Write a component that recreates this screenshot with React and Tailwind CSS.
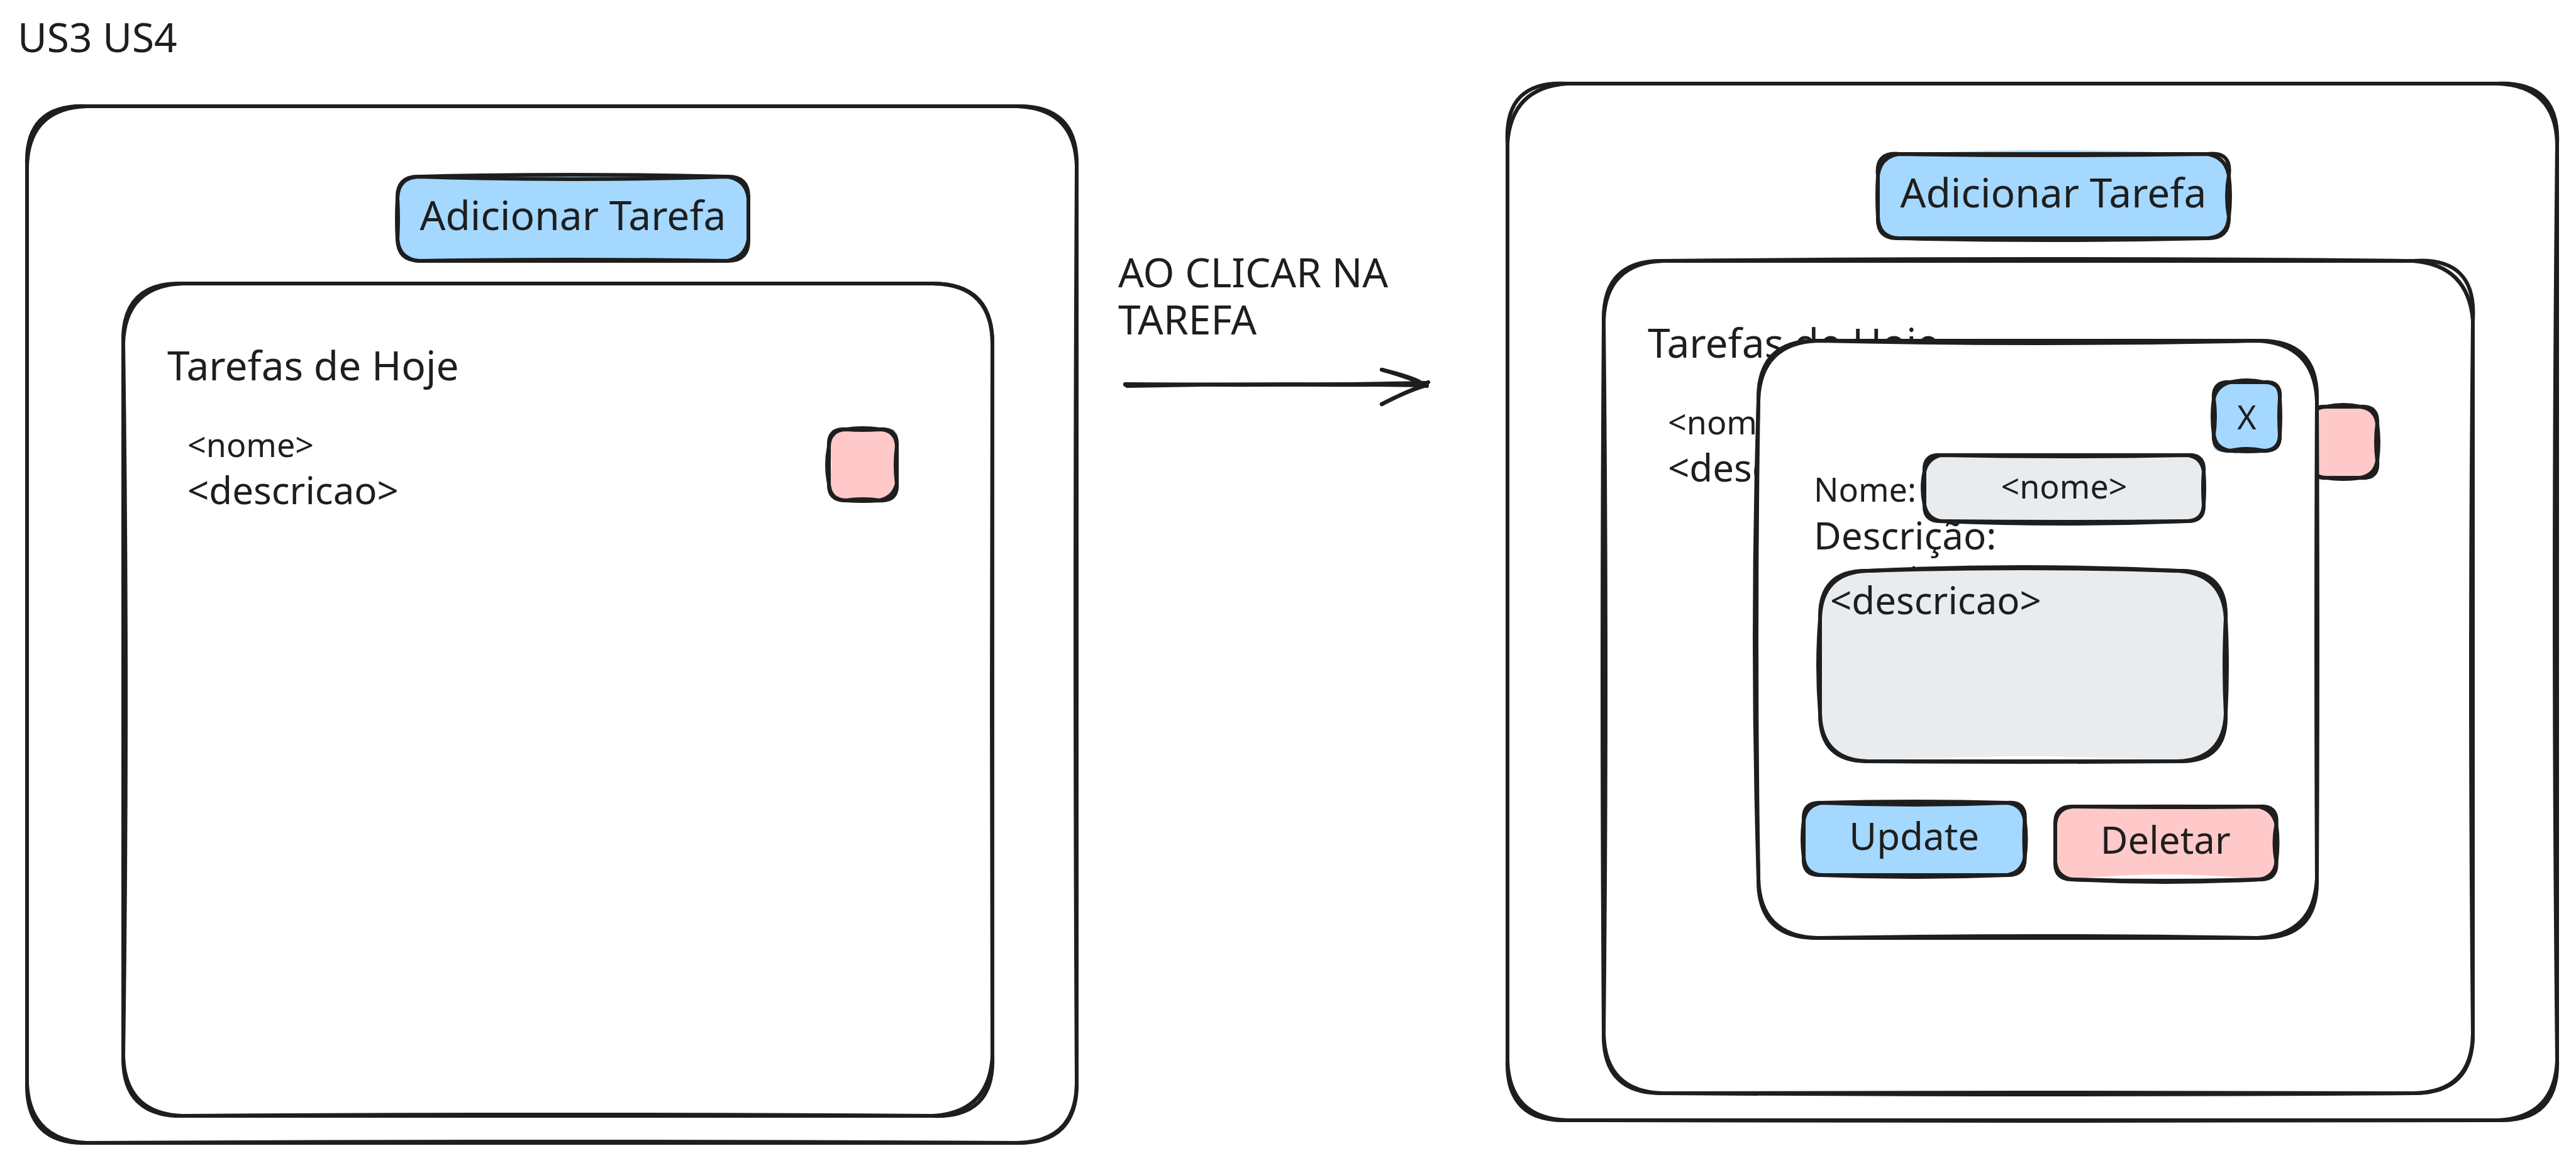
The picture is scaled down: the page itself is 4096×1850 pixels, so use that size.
const INK = "#1e1e1e";

/*
 * One pen pass round a rounded box.
 * sides: how far the middle of the top, right, bottom and left side bows outward.
 * corners: how far the top-left, top-right, bottom-right and bottom-left corner swells outward.
 */
function penPass(w, h, r, [t, ri, b, l], [tl, tr, br, bl]) {
  return [
    `M${r} 0`,
    `Q${w / 2} ${-2 * t} ${w - r} 0`,
    `Q${w + tr} ${-tr} ${w} ${r}`,
    `Q${w + 2 * ri} ${h / 2} ${w} ${h - r}`,
    `Q${w + br} ${h + br} ${w - r} ${h}`,
    `Q${w / 2} ${h + 2 * b} ${r} ${h}`,
    `Q${-bl} ${h + bl} 0 ${h - r}`,
    `Q${-2 * l} ${h / 2} 0 ${r}`,
    `Q${-tl} ${-tl} ${r} 0`,
    "Z",
  ].join(" ");
}

function Sketch({ w, h, r, passes, fill = "none", fillPass }) {
  return (
    <svg
      aria-hidden="true"
      viewBox={`0 0 ${w} ${h}`}
      preserveAspectRatio="none"
      className="pointer-events-none absolute inset-0 h-full w-full overflow-visible"
    >
      <path d={penPass(w, h, r, fillPass[0], fillPass[1])} fill={fill} />
      {passes.map(([sides, corners], i) => (
        <path
          key={i}
          d={penPass(w, h, r, sides, corners)}
          fill="none"
          stroke={INK}
          strokeWidth="6"
          strokeLinejoin="round"
          vectorEffect="non-scaling-stroke"
        />
      ))}
    </svg>
  );
}

const FLAT = [[0, 0, 0, 0], [0, 0, 0, 0]];

const looks = {
  frameA: {
    passes: [
      [[0, 0, 0, 0], [4, 2, 1, 2]],
      [[0, -2, -2, 0], [-3, -3, -1, -4]],
    ],
  },
  frameB: {
    passes: [
      [[0, 0, 1, 0], [6, 4, 3, 3]],
      [[0, -4, 0, 0], [-6, -3, -4, -3]],
    ],
  },
  listA: {
    passes: [
      [[0, 0, 0, 0], [3, 0, 4, 2]],
      [[0, -1, -2, -4], [-3, -1, -5, -3]],
    ],
  },
  listB: {
    passes: [
      [[0, 0, -1, 2], [2, 7, 1, 2]],
      [[3, -3, 2, -3], [-3, -7, -1, -2]],
    ],
  },
  addA: {
    fillPass: [[0, 0, 0, 0], [-2, -2, -1, 4]],
    passes: [
      [[3, 0, 0, 1], [1, 1, 1, -1]],
      [[-4, 0, -2, -1], [-1, -4, -5, -3]],
    ],
  },
  addB: {
    fillPass: [[6, 5, -2, 0], [-2, -2, 3, 0]],
    passes: [
      [[0, 2, 3, 1], [4, 5, 1, -1]],
      [[-2, -3, 0, 0], [-4, -5, -2, 2]],
    ],
  },
  taskA: {
    fillPass: [[0, 1, 0, -4], [-3, 9, 0, 0]],
    passes: [
      [[2, 0, 1, 3], [2, 2, 2, 1]],
      [[-1, -2, -2, 0], [-1, -1, -5, -1]],
    ],
  },
  taskB: {
    fillPass: [[-3, 0, 0, 0], [0, 4, 0, 0]],
    passes: [
      [[3, 2, 2, 0], [2, 2, 3, 2]],
      [[0, -2, 0, 0], [-1, -3, -4, -1]],
    ],
  },
  dialog: {
    passes: [
      [[0, 1, 0, 6], [2, 3, 3, 2]],
      [[-4, -1, -3, 3], [-3, -4, -4, -2]],
    ],
  },
  close: {
    fillPass: [[0, 0, 0, 0], [5, -4, 0, 9]],
    passes: [
      [[3, 1, 1, 2], [2, 3, 2, 2]],
      [[0, -1, -3, -2], [-5, 1, 0, -3]],
    ],
  },
  nameBox: {
    fillPass: [[0, 0, 0, -2], [-2, 0, -4, 0]],
    passes: [
      [[0, 1, 4, 3], [2, 2, 1, 1]],
      [[-2, -1, 1, 0], [-5, -3, -1, -4]],
    ],
  },
  noteBox: {
    fillPass: [[2, 0, -8, 0], [-6, 0, 0, 0]],
    passes: [
      [[6, 2, 1, 3], [2, 3, 3, 1]],
      [[4, -2, 0, 0], [-2, -4, -3, -2]],
    ],
  },
  update: {
    fillPass: [[0, 0, 0, 0], [0, 0, -2, 6]],
    passes: [
      [[2, 2, 3, 2], [2, 3, 1, 2]],
      [[-3, -1, 0, 0], [-4, -3, -4, -2]],
    ],
  },
  remove: {
    fillPass: [[4, 0, -8, -3], [0, 0, 0, 5]],
    passes: [
      [[0, 2, 4, 0], [1, 3, 2, 1]],
      [[-1, -3, 2, 0], [-2, -5, -3, -3]],
    ],
  },
};

function Box({ look, w, h, r, fill }) {
  const { passes, fillPass = FLAT } = looks[look];
  return <Sketch w={w} h={h} r={r} passes={passes} fillPass={fillPass} fill={fill} />;
}

function TaskScreen({ frame, list, add, task, children, className = "" }) {
  return (
    <section className={`relative pt-[112px] pb-[43px] ${className}`}>
      <Box look={frame} w={1669} h={1650} r={95} />
      <button
        type="button"
        className="relative ml-[589px] flex h-[134px] w-[558px] items-center justify-center pb-3 text-[64px] leading-[72px]"
      >
        <Box look={add} w={558} h={134} r={34} fill="#a5d8ff" />
        <span className="relative">Adicionar Tarefa</span>
      </button>
      <div className="relative mt-[36px] mr-[134px] ml-[153px] min-h-[1324px] pt-[94px]">
        <Box look={list} w={1382} h={1324} r={95} />
        <h2 className="relative pl-[70px] text-[64px] leading-[72px]">Tarefas de Hoje</h2>
        <div className="relative mt-[54px] flex items-start justify-between pr-[152px] pl-[102px]">
          <div>
            <p className="text-[52px] leading-[72px]">&lt;nome&gt;</p>
            <p className="text-[60px] leading-[72px]">&lt;descricao&gt;</p>
          </div>
          <button type="button" aria-label="Deletar tarefa" className="relative mt-3 h-[113px] w-[108px]">
            <Box look={task} w={108} h={113} r={27} fill="#ffc9c9" />
          </button>
        </div>
      </div>
      {children}
    </section>
  );
}

function TaskDialog() {
  return (
    <form
      aria-label="Tarefa"
      onSubmit={(e) => e.preventDefault()}
      className="absolute top-[409px] right-[382px] left-[399px] flex flex-col pt-[66px] pb-[93px]"
    >
      <Box look="dialog" w={888} h={950} r={95} fill="#ffffff" />
      <button
        type="button"
        className="relative mr-[59px] flex h-[109px] w-[105px] items-center justify-center self-end text-[52px] leading-[72px]"
      >
        <Box look="close" w={105} h={109} r={26} fill="#a5d8ff" />
        <span className="relative">X</span>
      </button>
      <div className="relative mt-[7px] flex items-start pr-[180px] pl-[88px]">
        <label htmlFor="nome" className="mt-[18px] w-[176px] shrink-0 text-[52px] leading-[72px]">
          Nome:
        </label>
        <div className="relative h-[105px] grow">
          <Box look="nameBox" w={444} h={105} r={26} fill="#e9ecef" />
          <input
            id="nome"
            type="text"
            defaultValue="<nome>"
            className="relative h-full w-full bg-transparent pb-2 text-center text-[52px] leading-[72px] outline-none"
          />
        </div>
      </div>
      <label htmlFor="descricao" className="relative pl-[88px] text-[60px] leading-[44px]">
        Descrição:
      </label>
      <div className="relative mt-[35px] mr-[145px] ml-[98px] h-[303px]">
        <svg aria-hidden="true" viewBox="0 0 8 14" className="absolute -top-2 left-[145px] h-[14px] w-2">
          <path d="M4 3V12" stroke={INK} strokeWidth="5" strokeLinecap="round" />
        </svg>
        <Box look="noteBox" w={645} h={303} r={76} fill="#e9ecef" />
        <textarea
          id="descricao"
          defaultValue="<descricao>"
          className="relative block h-full w-full resize-none overflow-hidden bg-transparent pt-[10px] pl-4 text-[60px] leading-[72px] outline-none"
        />
      </div>
      <div className="relative mt-[66px] flex items-start gap-12 pr-[65px] pl-[72px]">
        <button
          type="submit"
          className="relative flex h-[115px] flex-1 items-center justify-center pb-3 text-[60px] leading-[72px]"
        >
          <Box look="update" w={352} h={115} r={28} fill="#a5d8ff" />
          <span className="relative">Update</span>
        </button>
        <button
          type="button"
          className="relative mt-[6px] flex h-[116px] flex-1 items-center justify-center pb-3 text-[60px] leading-[72px]"
        >
          <Box look="remove" w={352} h={116} r={28} fill="#ffc9c9" />
          <span className="relative">Deletar</span>
        </button>
      </div>
    </form>
  );
}

function ClickArrow() {
  return (
    <svg
      aria-hidden="true"
      viewBox="0 0 492 60"
      className="mt-[40px] ml-[6px] w-full overflow-visible"
      fill="none"
      stroke={INK}
      strokeWidth="6"
      strokeLinecap="round"
      strokeLinejoin="round"
    >
      <path d="M5 26Q250 29 485 24" />
      <path d="M8 29Q250 24 483 28" />
      <path d="M5 27Q120 26 300 27T487 23" />
      <path d="M413 3Q465 18 485 29" />
      <path d="M413 3Q462 15 476 24" />
      <path d="M413 58Q450 38 485 26" />
      <path d="M413 58Q458 35 484 28" />
    </svg>
  );
}

export default function App() {
  return (
    <main className="flex min-h-screen w-full flex-col bg-white font-['Noto_Sans',sans-serif] text-[#1e1e1e]">
      <h1 className="h-[133px] pt-[23px] pl-[28px] text-[64px] leading-[72px]">US3 US4</h1>
      <div className="grid grid-cols-[1669fr_685fr_1669fr] items-start pr-[30px] pl-[43px]">
        <TaskScreen frame="frameA" list="listA" add="addA" task="taskA" className="mt-9" />
        <div className="pt-[262px] pr-[127px] pl-[66px]">
          <p className="text-[64px] leading-[75px]">
            AO CLICAR NA
            <br />
            TAREFA
          </p>
          <ClickArrow />
        </div>
        <TaskScreen frame="frameB" list="listB" add="addB" task="taskB">
          <TaskDialog />
        </TaskScreen>
      </div>
    </main>
  );
}
